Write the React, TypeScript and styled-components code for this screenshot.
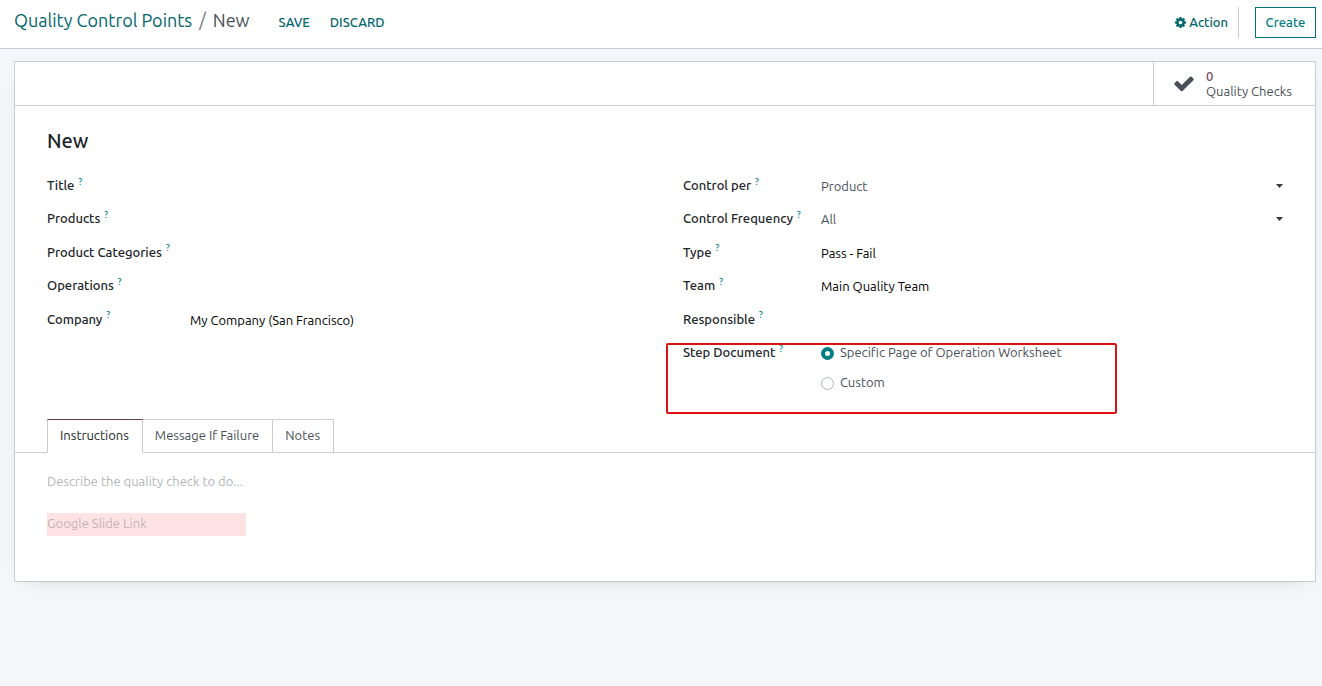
import React, { useState } from "react";
import styled, { createGlobalStyle } from "styled-components";

const color = {
  teal: "#01666b",
  tealBright: "#017e84",
  text: "#495057",
  dark: "#212529",
  border: "#c9ccd2",
  page: "#f5f6fa",
  plum: "#7c3f68",
};

const GlobalStyle = createGlobalStyle`
  *, *::before, *::after { box-sizing: border-box; }
  body {
    margin: 0;
    background: ${color.page};
    color: ${color.text};
    font: 13px/20px Ubuntu, "Noto Sans", "Open Sans", sans-serif;
  }
  button, input, select, textarea { font: inherit; color: inherit; }
`;

const ControlPanel = styled.header`
  display: flex;
  align-items: center;
  height: 49px;
  padding: 0 6px 4px 14px;
  background: #fff;
  border-bottom: 1px solid ${color.border};
`;

const Breadcrumb = styled.nav`
  display: flex;
  gap: 7px;
  margin-right: 29px;
  padding-bottom: 4px;
  font-size: 18px;
  line-height: 24px;
`;

const CrumbLink = styled.a`
  color: ${color.teal};
  text-decoration: none;
`;

const Separator = styled.span`
  color: #6c757d;
`;

const TextButton = styled.button`
  display: flex;
  align-items: center;
  gap: 2px;
  margin-right: 20px;
  padding: 0;
  border: 0;
  background: none;
  color: ${color.teal};
  font-weight: 500;
  cursor: pointer;
`;

const PanelEnd = styled.div`
  display: flex;
  align-items: center;
  margin-left: auto;
`;

const ActionArea = styled.div`
  display: flex;
  align-items: center;
  height: 31px;
  margin-right: 16px;
  border-right: 1px solid ${color.border};

  ${TextButton} {
    margin-right: 10px;
  }
`;

const CreateButton = styled.button`
  width: 61px;
  height: 31px;
  padding: 0;
  border: 1px solid #01747a;
  background: #fff;
  color: ${color.tealBright};
  font-weight: 500;
  cursor: pointer;
`;

const Sheet = styled.main`
  margin: 12px 6px 24px 14px;
  background: #fff;
  border: 1px solid ${color.border};
  box-shadow: 0 5px 20px -15px rgba(0, 0, 0, 0.4);
`;

const ButtonBox = styled.div`
  display: flex;
  justify-content: flex-end;
  height: 44px;
  border-bottom: 1px solid ${color.border};
`;

const StatButton = styled.button`
  display: flex;
  align-items: center;
  gap: 12px;
  width: 162px;
  padding: 0 0 0 20px;
  border: 0;
  border-left: 1px solid ${color.border};
  background: none;
  text-align: left;
  line-height: 15px;
  cursor: pointer;
`;

const StatValue = styled.span`
  display: block;
  color: ${color.plum};
  font-weight: 500;
`;

const FormBody = styled.div`
  padding: 22px 32px 0;
`;

const RecordTitle = styled.h1`
  margin: 0 0 21px;
  color: ${color.dark};
  font-size: 20px;
  font-weight: 500;
  line-height: 26px;
`;

const Columns = styled.div`
  display: grid;
  grid-template-columns: 1fr 1fr;
  gap: 36px;
  min-height: 244px;
`;

const Group = styled.div<{ $labelWidth: number }>`
  --label-width: ${(p) => p.$labelWidth}px;
`;

const Rows = styled.div`
  display: grid;
  grid-auto-rows: 1fr;
  min-height: 167px;
`;

const Row = styled.div`
  position: relative;
  display: grid;
  grid-template-columns: var(--label-width) 1fr;
  align-items: start;
`;

const Label = styled.label`
  color: ${color.dark};
  font-weight: 500;
  white-space: nowrap;
`;

const Hint = styled.sup`
  margin-left: 4px;
  color: ${color.tealBright};
  font-size: 9px;
  line-height: 0;
`;

const TextInput = styled.input`
  width: 100%;
  height: 22px;
  padding: 0;
  border: 0;
  outline: 0;
  background: none;
  color: #000;
`;

const SelectWrap = styled.div`
  display: grid;
  align-items: center;

  > * {
    grid-area: 1 / 1;
  }
  > svg {
    justify-self: end;
    pointer-events: none;
  }
`;

const Select = styled.select`
  width: 100%;
  height: 22px;
  padding: 0;
  border: 0;
  outline: 0;
  appearance: none;
  background: none;
`;

const RadioList = styled.div`
  display: grid;
  gap: 10px;
`;

const RadioLabel = styled.label`
  display: flex;
  align-items: center;
  gap: 6px;
`;

const Radio = styled.input`
  width: 13px;
  height: 13px;
  margin: 2px 0 0;
  border: 1px solid #adb5bd;
  border-radius: 50%;
  appearance: none;
  background: #fff;

  &:checked {
    border: 4px solid ${color.tealBright};
  }
`;

const Highlight = styled.div`
  position: absolute;
  top: 1px;
  left: -17px;
  width: 451px;
  height: 71px;
  border: 2px solid #de1212;
  border-radius: 2px;
  pointer-events: none;
`;

const TabBar = styled.div`
  display: flex;
  padding-left: 32px;
  box-shadow: inset 0 -1px ${color.border};
`;

const Tab = styled.button<{ $active: boolean }>`
  height: 34px;
  padding: 0 13px 2px 12px;
  border: 1px solid ${color.border};
  border-left-width: ${(p) => (p.$active ? 1 : 0)}px;
  border-top-color: ${(p) => (p.$active ? "#5f4158" : color.border)};
  border-bottom-color: ${(p) => (p.$active ? "#fff" : color.border)};
  background: #fff;
  color: ${(p) => (p.$active ? color.dark : color.text)};
  cursor: pointer;
`;

const TabPage = styled.div`
  display: grid;
  justify-items: start;
  gap: 20px;
  padding: 18px 32px 45px;
`;

const Description = styled.textarea`
  display: block;
  width: 100%;
  height: 22px;
  padding: 0;
  border: 0;
  outline: 0;
  resize: none;
  background: none;

  &::placeholder {
    color: #b4b6b9;
  }
`;

const LinkInput = styled.input`
  width: 199px;
  height: 23px;
  padding: 0 0 4px;
  border: 0;
  outline: 0;
  background: #ffe3e4;

  &::placeholder {
    color: #c4b3b6;
  }
`;

const GearIcon = () => (
  <svg width="13" height="13" viewBox="0 0 1792 1792" fill="currentColor" aria-hidden="true">
    <path d="M1152 896q0-106-75-181t-181-75-181 75-75 181 75 181 181 75 181-75 75-181zm512-109v222q0 12-8 23t-20 13l-185 28q-19 54-39 91 35 50 107 138 10 12 10 25t-9 23q-27 37-99 108t-94 71q-12 0-26-9l-138-108q-44 23-91 38-16 136-29 186-7 28-36 28h-222q-14 0-24.5-8.5t-11.5-21.5l-28-184q-49-16-90-37l-141 107q-10 9-25 9-14 0-25-11-126-114-165-168-7-10-7-23 0-12 8-23 15-21 51-66.5t54-70.5q-27-50-41-99l-183-27q-13-2-21-12.5t-8-23.5v-222q0-12 8-23t19-13l186-28q14-46 39-92-40-57-107-138-10-12-10-24 0-10 9-23 26-36 98.5-107.5t94.5-71.5q13 0 26 10l138 107q44-23 91-38 16-136 29-186 7-28 36-28h222q14 0 24.5 8.5t11.5 21.5l28 184q49 16 90 37l142-107q9-9 24-9 13 0 25 10 129 119 165 170 7 8 7 22 0 12-8 23-15 21-51 66.5t-54 70.5q26 50 41 98l183 28q13 2 21 12.5t8 23.5z" />
  </svg>
);

const CheckIcon = () => (
  <svg width="20" height="20" viewBox="100 140 1592 1592" fill={color.text} aria-hidden="true">
    <path d="M1671 566q0 40-28 68l-724 724-136 136q-28 28-68 28t-68-28l-136-136-362-362q-28-28-28-68t28-68l136-136q28-28 68-28t68 28l294 295 656-657q28-28 68-28t68 28l136 136q28 28 28 68z" />
  </svg>
);

const Caret = () => (
  <svg width="8" height="4" viewBox="0 0 8 4" fill="#343a40" aria-hidden="true">
    <path d="M1 0h7L4.500 4z" />
  </svg>
);

type FieldProps = { id: string; label: string; value?: string; select?: boolean };

const Field = ({ id, label, value = "", select }: FieldProps) => (
  <Row>
    <Label htmlFor={id}>
      {label}
      <Hint>?</Hint>
    </Label>
    {select ? (
      <SelectWrap>
        <Select id={id} defaultValue={value}>
          <option>{value}</option>
        </Select>
        <Caret />
      </SelectWrap>
    ) : (
      <TextInput id={id} defaultValue={value} />
    )}
  </Row>
);

const leftFields: FieldProps[] = [
  { id: "title", label: "Title" },
  { id: "products", label: "Products" },
  { id: "categories", label: "Product Categories" },
  { id: "operations", label: "Operations" },
  { id: "company", label: "Company", value: "My Company (San Francisco)" },
];

const rightFields: FieldProps[] = [
  { id: "control-per", label: "Control per", value: "Product", select: true },
  { id: "frequency", label: "Control Frequency", value: "All", select: true },
  { id: "type", label: "Type", value: "Pass - Fail" },
  { id: "team", label: "Team", value: "Main Quality Team" },
  { id: "responsible", label: "Responsible" },
];

const tabs = ["Instructions", "Message If Failure", "Notes"];

export default function App() {
  const [activeTab, setActiveTab] = useState(tabs[0]);

  return (
    <>
      <GlobalStyle />
      <ControlPanel>
        <Breadcrumb>
          <CrumbLink href="#points">Quality Control Points</CrumbLink>
          <Separator>/</Separator>
          <span>New</span>
        </Breadcrumb>
        <TextButton>SAVE</TextButton>
        <TextButton>DISCARD</TextButton>
        <PanelEnd>
          <ActionArea>
            <TextButton>
              <GearIcon />
              Action
            </TextButton>
          </ActionArea>
          <CreateButton>Create</CreateButton>
        </PanelEnd>
      </ControlPanel>

      <Sheet>
        <ButtonBox>
          <StatButton>
            <CheckIcon />
            <span>
              <StatValue>0</StatValue>
              Quality Checks
            </span>
          </StatButton>
        </ButtonBox>

        <FormBody>
          <RecordTitle>New</RecordTitle>
          <Columns>
            <Group $labelWidth={143}>
              <Rows>
                {leftFields.map((f) => (
                  <Field key={f.id} {...f} />
                ))}
              </Rows>
            </Group>
            <Group $labelWidth={138}>
              <Rows>
                {rightFields.map((f) => (
                  <Field key={f.id} {...f} />
                ))}
              </Rows>
              <Row role="radiogroup" aria-labelledby="step-document">
                <Label as="span" id="step-document">
                  Step Document
                  <Hint>?</Hint>
                </Label>
                <RadioList>
                  <RadioLabel>
                    <Radio type="radio" name="step" defaultChecked />
                    Specific Page of Operation Worksheet
                  </RadioLabel>
                  <RadioLabel>
                    <Radio type="radio" name="step" />
                    Custom
                  </RadioLabel>
                </RadioList>
                <Highlight />
              </Row>
            </Group>
          </Columns>
        </FormBody>

        <TabBar role="tablist">
          {tabs.map((name) => (
            <Tab
              key={name}
              role="tab"
              aria-selected={name === activeTab}
              $active={name === activeTab}
              onClick={() => setActiveTab(name)}
            >
              {name}
            </Tab>
          ))}
        </TabBar>
        <TabPage role="tabpanel">
          <Description aria-label="Instructions" placeholder="Describe the quality check to do..." />
          <LinkInput aria-label="Google Slide Link" placeholder="Google Slide Link" />
        </TabPage>
      </Sheet>
    </>
  );
}
